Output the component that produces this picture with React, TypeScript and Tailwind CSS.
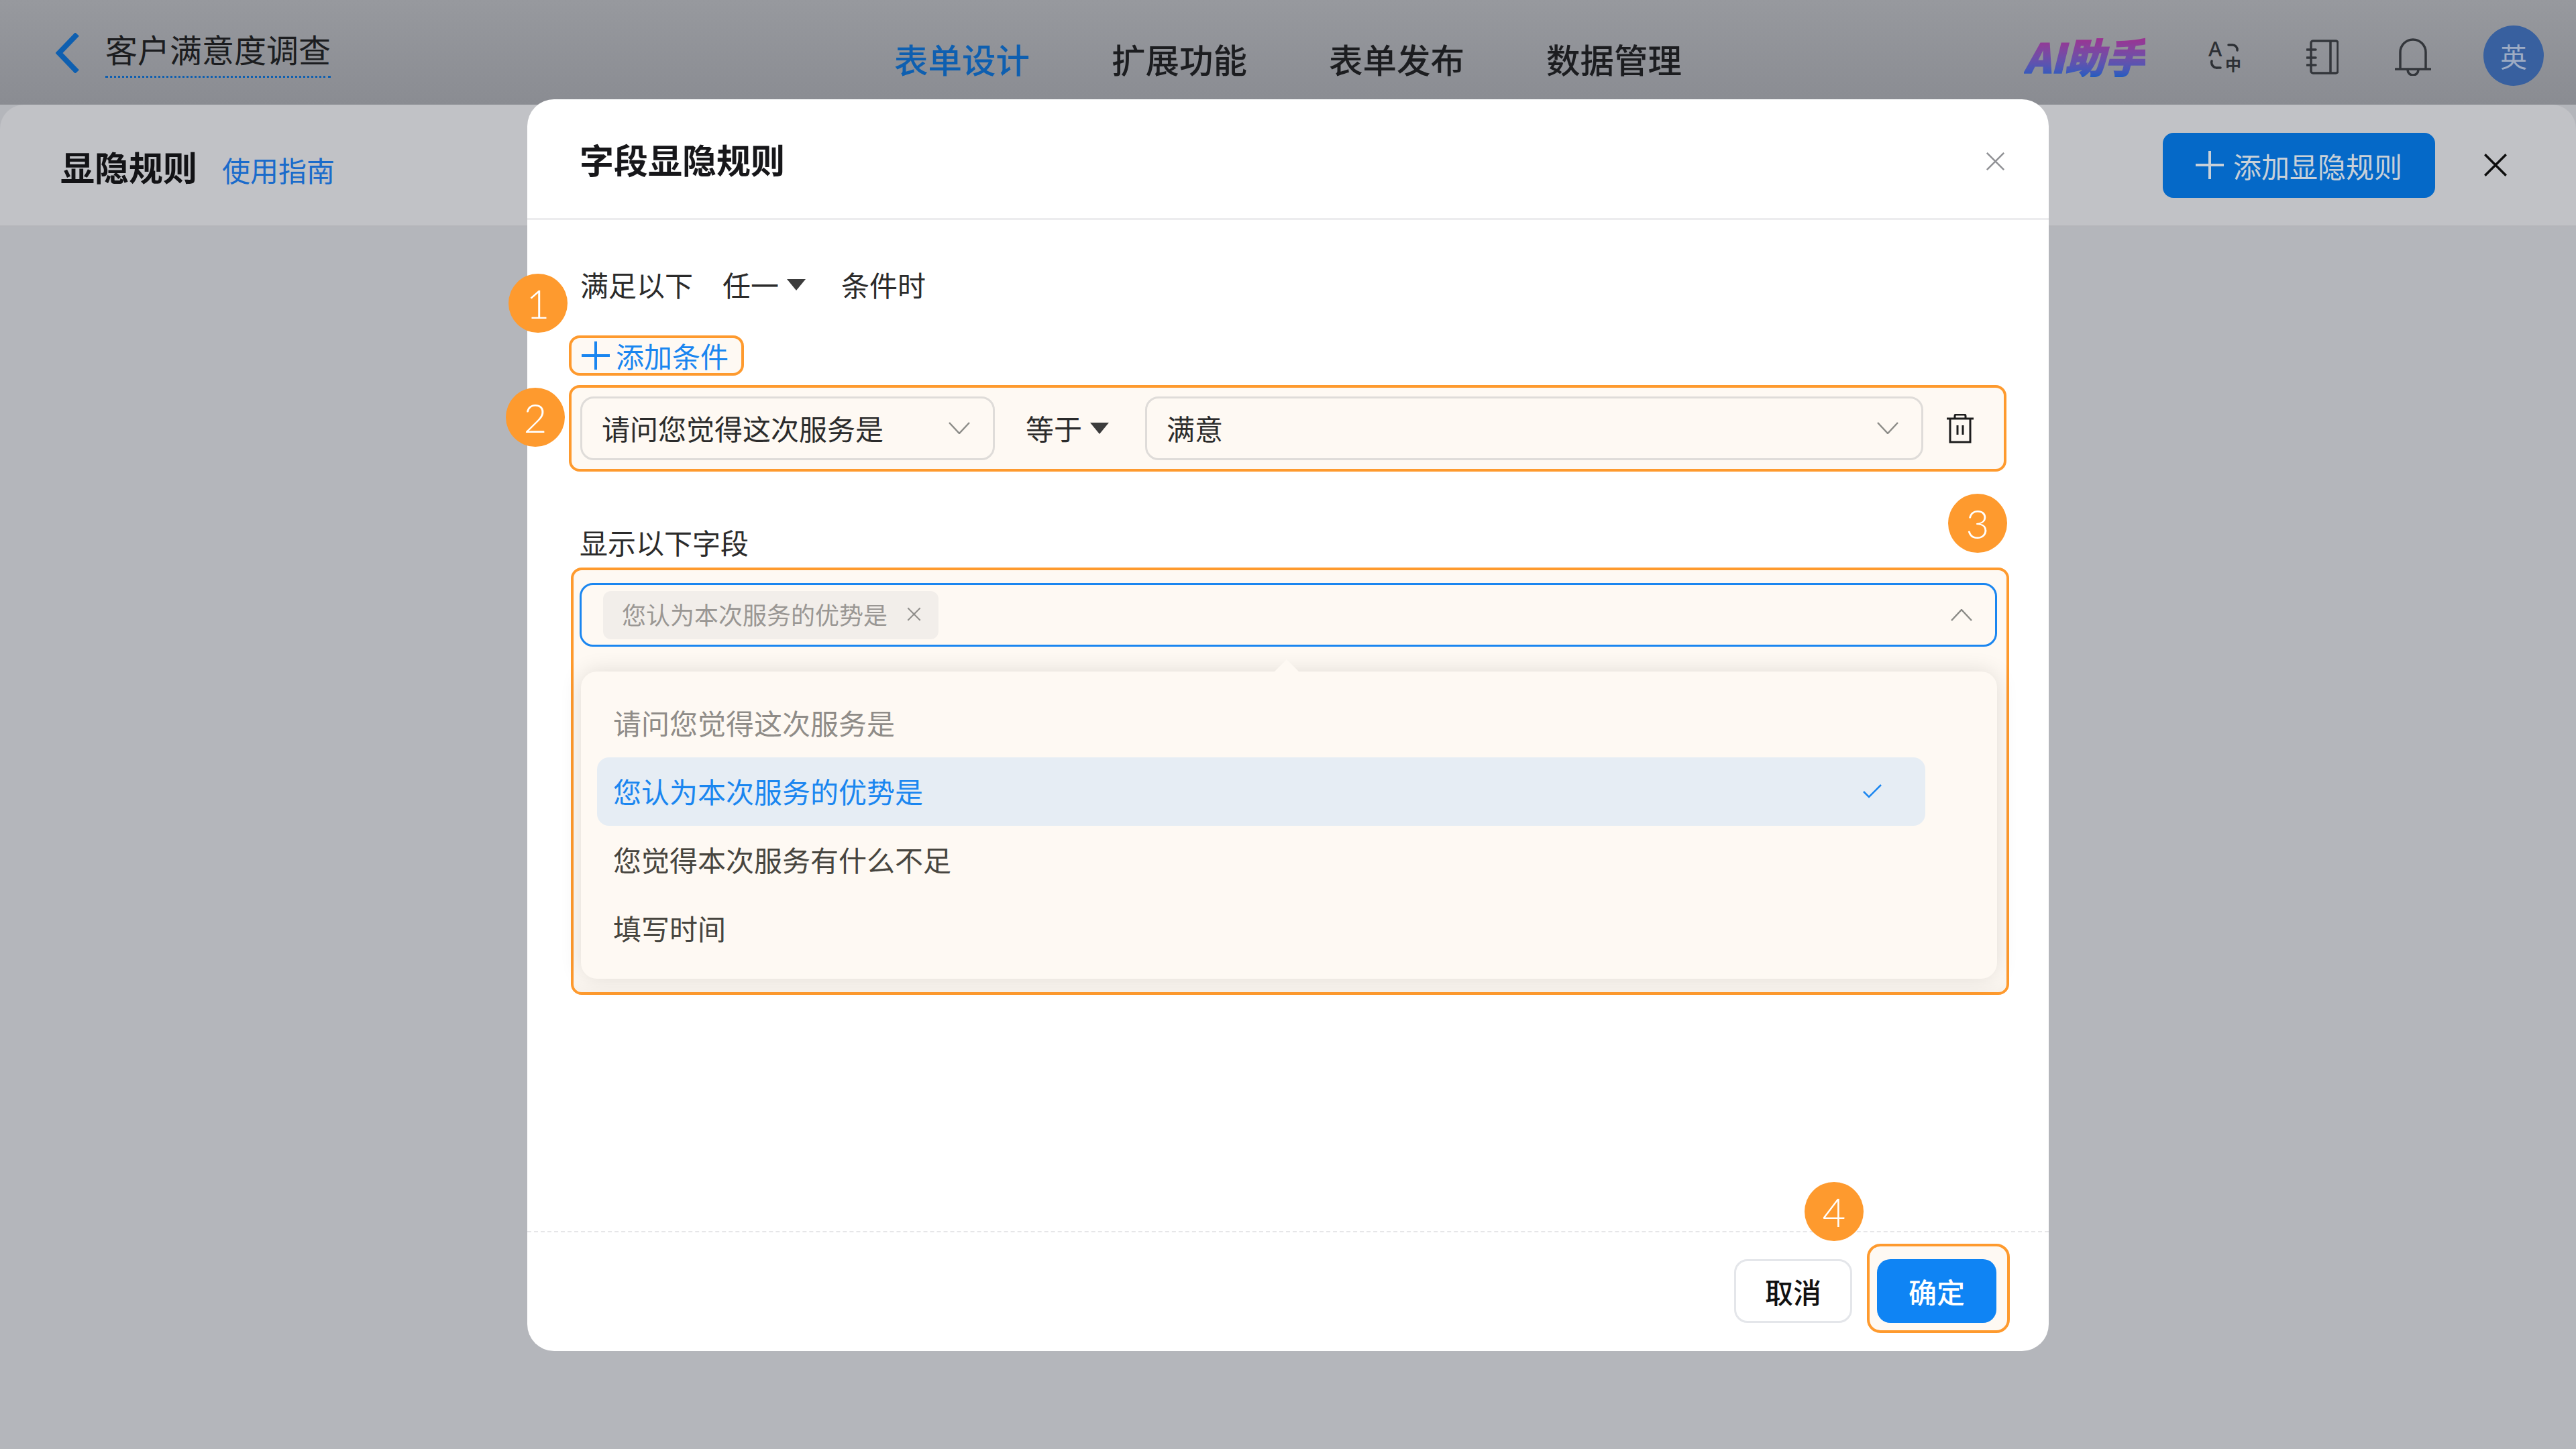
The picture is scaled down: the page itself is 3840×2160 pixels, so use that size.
import type { ReactNode } from "react"

const FIELD_OPTIONS = [
  { label: "请问您觉得这次服务是", state: "disabled" },
  { label: "您认为本次服务的优势是", state: "selected" },
  { label: "您觉得本次服务有什么不足", state: "normal" },
  { label: "填写时间", state: "normal" },
]

function Chevron({ up = false, className = "" }: { up?: boolean; className?: string }) {
  return (
    <svg width="32" height="18" viewBox="0 0 32 18" fill="none" className={className}>
      <path d={up ? "M1 17 16 1l15 16" : "M1 1l15 16L31 1"} stroke="#8c8c88" strokeWidth="2.5" />
    </svg>
  )
}

function Caret({ color = "#3c3c3c" }: { color?: string }) {
  return (
    <svg width="28" height="17" viewBox="0 0 28 17">
      <path d="M0 0h28L14 17z" fill={color} />
    </svg>
  )
}

function Cross({ size, color, width = 2.5 }: { size: number; color: string; width?: number }) {
  return (
    <svg width={size} height={size} viewBox="0 0 32 32" fill="none">
      <path d="M2 2l28 28M30 2 2 30" stroke={color} strokeWidth={width * (32 / size)} />
    </svg>
  )
}

function Plus({ size, color }: { size: number; color: string }) {
  return (
    <svg width={size} height={size} viewBox="0 0 42 42" fill="none">
      <path d="M21 0v42M0 21h42" stroke={color} strokeWidth="4" />
    </svg>
  )
}

function TranslateIcon() {
  return (
    <svg width="72" height="72" viewBox="-12 -12 72 72" fill="none" className="-m-[12px]">
      <text x="-1" y="23" fontSize="31" fontWeight="500" fontFamily="'Noto Sans',sans-serif" fill="#2d3035">A</text>
      <text x="24" y="44" fontSize="24" fontWeight="700" fontFamily="'Noto Sans CJK SC',sans-serif" fill="#2d3035">中</text>
      <path d="M29 6h6a7 7 0 0 1 7 8" stroke="#2d3035" strokeWidth="3.5" strokeLinecap="round" />
      <path d="M4 30a8 8 0 0 0 9 10h4" stroke="#2d3035" strokeWidth="3.5" strokeLinecap="round" />
    </svg>
  )
}

function NotebookIcon() {
  return (
    <svg width="48" height="52" viewBox="0 0 48 52" fill="none" stroke="#33363b" strokeWidth="3.5">
      <rect x="7" y="2" width="40" height="48" rx="3" />
      <path d="M36 2v48" />
      <path d="M1 15h13M1 27h13M1 38h13" strokeLinecap="round" />
    </svg>
  )
}

function BellIcon() {
  return (
    <svg width="54" height="56" viewBox="0 0 54 56" fill="none" stroke="#33363b" strokeWidth="3.5">
      <path d="M8 46V21a19 19 0 0 1 38 0v25" />
      <path d="M1 46h52" strokeLinecap="round" />
      <path d="M19 47a8 8 0 0 0 16 0" />
    </svg>
  )
}

function TrashIcon() {
  return (
    <svg width="42" height="44" viewBox="0 0 42 44" fill="none" stroke="#1d1d1d" strokeWidth="3">
      <path d="M1 7h40M6 7v35h30V7" />
      <path d="M13 7V3a2 2 0 0 1 2-2h12a2 2 0 0 1 2 2v4" />
      <path d="M17 17v14M25 17v14" />
    </svg>
  )
}

function Badge({ n, className }: { n: number; className: string }) {
  return (
    <div
      className={`absolute flex h-[88px] w-[88px] items-center justify-center rounded-full bg-[#fe9a2e] font-['Lato',sans-serif] text-[60px] font-light leading-none text-white ${className}`}
    >
      {n}
    </div>
  )
}

function SelectBox({ width, children }: { width: string; children: ReactNode }) {
  return (
    <div
      className={`flex h-[95px] items-center justify-between rounded-[20px] border-[3px] border-[#dfdcd9] pb-[2px] pl-[29px] pr-[34px] text-[42px] leading-[60px] text-[#2b2b2b] ${width}`}
    >
      {children}
    </div>
  )
}

export default function App() {
  return (
    <div className="relative h-[2160px] w-[3840px] overflow-hidden bg-[#b4b6bb] font-['Noto_Sans_CJK_SC',sans-serif]">
      {/* Top bar */}
      <header className="flex h-[156px] items-center bg-gradient-to-b from-[#97999e] to-[#8a8c92]">
        <div className="flex w-[1333px] items-start pl-[83px]">
          <svg width="36" height="60" viewBox="0 0 36 60" fill="none" className="mt-[8px]">
            <path d="M32 2 5 30l27 28" stroke="#0e5fb0" strokeWidth="8" />
          </svg>
          <div className="ml-[38px] border-b-[3px] border-dotted border-[#0e5fb0] pb-[10px] text-[48px] leading-[62px] text-[#1c1d20]">
            客户满意度调查
          </div>
        </div>
        <nav className="flex gap-[122px] pt-[17px] text-[50.5px] font-medium leading-[70px] text-[#1c1d20]">
          <span className="text-[#0e5fb0]">表单设计</span>
          <span>扩展功能</span>
          <span>表单发布</span>
          <span>数据管理</span>
        </nav>
        <div className="ml-auto flex items-center pr-[48px] pt-[10px]">
          <span className="bg-gradient-to-b from-[#a4268c] to-[#1e5cc0] bg-clip-text text-[60px] font-black italic leading-[64px] text-transparent [-webkit-text-stroke:1.5px_transparent]">
            AI助手
          </span>
          <span className="ml-[95px] mt-[4px] flex"><TranslateIcon /></span>
          <span className="ml-[97px] mt-[4px] flex"><NotebookIcon /></span>
          <span className="ml-[84px] mt-[4px] flex"><BellIcon /></span>
          <div className="ml-[78px] flex h-[90px] w-[90px] items-center justify-center rounded-full bg-[#38609f] text-[40px] text-[#9eacc4]">
            英
          </div>
        </div>
      </header>

      {/* Sheet header */}
      <div className="flex h-[183px] items-center justify-between rounded-t-[36px] border-b-[3px] border-[#b4b5ba] bg-[#c1c2c6] pl-[90px] pr-[102px]">
        <div className="flex items-center gap-[37px] pt-[4px]">
          <span className="text-[51px] font-bold leading-[70px] text-[#131316]">显隐规则</span>
          <span className="pt-[10px] text-[42px] leading-[60px] text-[#1a6bcb]">使用指南</span>
        </div>
        <div className="flex items-center gap-[72px]">
          <button className="flex h-[97px] w-[406px] items-center justify-center gap-[14px] rounded-[16px] bg-[#0569c8] text-[42px] text-[#c8d0d8]">
            <Plus size={42} color="#c8d0d8" />
            添加显隐规则
          </button>
          <Cross size={36} color="#0d0d0d" width={3.5} />
        </div>
      </div>

      {/* Modal */}
      <div className="absolute left-[786px] top-[148px] flex h-[1866px] w-[2268px] flex-col rounded-[40px] bg-white">
        <div className="flex h-[180px] shrink-0 items-center justify-between border-b-[3px] border-[#ececee] pl-[78px] pr-[65px]">
          <span className="text-[51px] font-bold leading-[70px] text-[#17171a]">字段显隐规则</span>
          <span className="mt-[7px] flex"><Cross size={29} color="#8f9094" /></span>
        </div>

        <div className="flex-1 pl-[62px] text-[42px] leading-[60px] text-[#2b2b2b]">
          <div className="mt-[66px] flex items-center pl-[17px]">
            <span>满足以下</span>
            <span className="ml-[44px]">任一</span>
            <span className="ml-[12px]"><Caret /></span>
            <span className="ml-[53px]">条件时</span>
          </div>

          <div className="mt-[46px] flex h-[60px] w-[261px] items-center gap-[9px] rounded-[16px] border-4 border-[#fe9a2e] bg-[#fef9f3] pl-[15px] text-[42px] text-[#1a86f0]">
            <Plus size={42} color="#1a86f0" />
            <span>添加条件</span>
          </div>

          <div className="mt-[14px] flex h-[129px] w-[2143px] items-center rounded-[16px] border-4 border-[#fe9a2e] bg-[#fef9f3] pl-[13px]">
            <SelectBox width="w-[618px]">
              <span>请问您觉得这次服务是</span>
              <Chevron />
            </SelectBox>
            <span className="ml-[46px] pb-[2px]">等于</span>
            <span className="ml-[12px]"><Caret /></span>
            <div className="ml-[54px]">
              <SelectBox width="w-[1160px]">
                <span>满意</span>
                <Chevron />
              </SelectBox>
            </div>
            <span className="ml-[34px] flex"><TrashIcon /></span>
          </div>

          <div className="mt-[75px] pl-[16px]">显示以下字段</div>

          <div className="ml-[3px] mt-[8px] h-[637px] w-[2144px] rounded-[16px] border-4 border-[#fe9a2e] bg-[#fef9f3] pl-[9px] pt-[19px] shadow-[inset_0_-20px_30px_-20px_rgba(0,0,0,0.06)]">
            <div className="flex h-[95px] w-[2113px] items-center justify-between rounded-[20px] border-[3px] border-[#1a86f0] pl-[32px] pr-[34px]">
              <div className="flex h-[72px] w-[500px] items-center rounded-[12px] bg-[#f2eeea] pb-[3px] pl-[28px] text-[36px] leading-[50px] text-[#9a9794]">
                <span>您认为本次服务的优势是</span>
                <span className="ml-[29px] flex"><Cross size={21} color="#8f8d8a" width={2} /></span>
              </div>
              <Chevron up />
            </div>

            <div className="relative ml-[2px] mt-[37px] h-[458px] w-[2111px] rounded-[24px] bg-[#fef9f3] pl-[24px] pr-[107px] pt-[26px] shadow-[0_0_32px_rgba(0,0,0,0.12)]">
              <div className="absolute left-[1034px] top-[-18px] h-0 w-0 border-x-[18px] border-b-[18px] border-x-transparent border-b-[#fef9f3]" />
              {FIELD_OPTIONS.map((opt) => (
                <div
                  key={opt.label}
                  className={`flex h-[102px] items-center justify-between rounded-[18px] pb-[3px] pl-[24px] pr-[64px] ${
                    opt.state === "selected"
                      ? "bg-[#e6edf4] text-[#1a86f0]"
                      : opt.state === "disabled"
                        ? "text-[#8f8c88]"
                        : "text-[#47453f]"
                  }`}
                >
                  <span>{opt.label}</span>
                  {opt.state === "selected" && (
                    <svg width="30" height="22" viewBox="0 0 30 22" fill="none">
                      <path d="M2 12l8 8L28 2" stroke="#1a86f0" strokeWidth="2.5" />
                    </svg>
                  )}
                </div>
              ))}
            </div>
          </div>
        </div>

        {/* Footer */}
        <div className="flex h-[179px] shrink-0 items-start justify-end gap-[22px] border-t-2 border-dashed border-[#e6e6e8] pr-[58px] pt-[17px]">
          <button className="mt-[23px] h-[95px] w-[176px] rounded-[20px] border-[3px] border-[#e4e6ea] bg-white text-[42px] font-medium text-[#111]">
            取消
          </button>
          <div className="h-[133px] w-[213px] rounded-[20px] border-4 border-[#fe9a2e] bg-[#fef9f3] pl-[11px] pt-[19px]">
            <button className="h-[95px] w-[178px] rounded-[20px] bg-[#0f84f4] text-[42px] font-medium text-white">
              确定
            </button>
          </div>
        </div>

        <Badge n={1} className="left-[-28px] top-[260px]" />
        <Badge n={2} className="left-[-32px] top-[430px]" />
        <Badge n={3} className="left-[2118px] top-[588px]" />
        <Badge n={4} className="left-[1904px] top-[1614px]" />
      </div>
    </div>
  )
}
